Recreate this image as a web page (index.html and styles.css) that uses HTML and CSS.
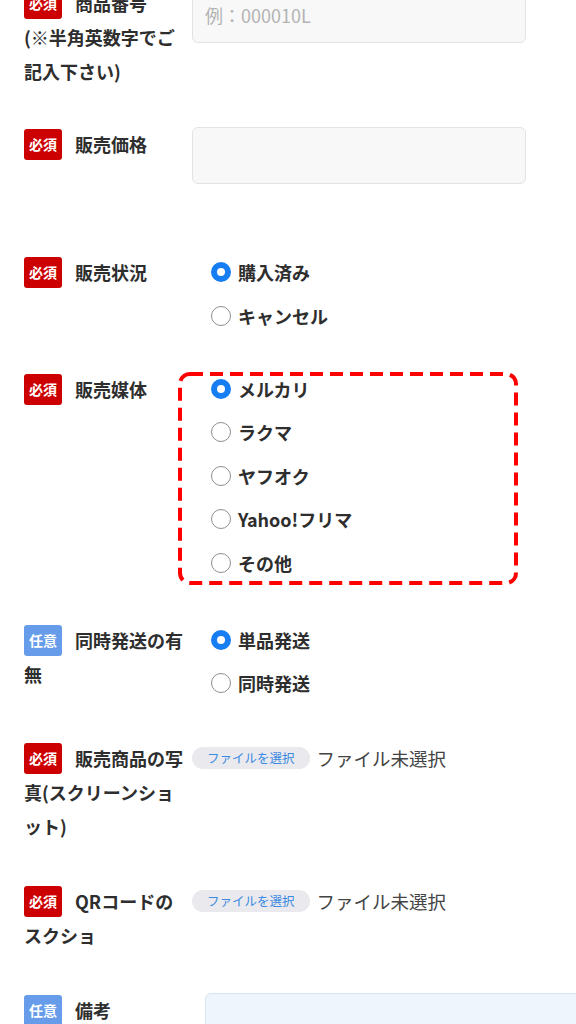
FILE: index.html
```html
<!DOCTYPE html>
<html lang="ja">
<head>
<meta charset="utf-8">
<title>フォーム</title>
<link rel="stylesheet" href="styles.css">
</head>
<body>
<form class="form">
  <div class="row row--code">
    <div class="label"><span class="badge badge--req">必須</span>商品番号<br>(※半角英数字でご記入下さい)</div>
    <div class="field"><input class="text" type="text" placeholder="例：000010L"></div>
  </div>

  <div class="row row--price">
    <div class="label"><span class="badge badge--req">必須</span>販売価格</div>
    <div class="field"><input class="text" type="text"></div>
  </div>

  <div class="row row--status">
    <div class="label"><span class="badge badge--req">必須</span>販売状況</div>
    <div class="field">
      <div class="radios">
        <label class="radio"><input type="radio" name="status" checked><span>購入済み</span></label>
        <label class="radio"><input type="radio" name="status"><span>キャンセル</span></label>
      </div>
    </div>
  </div>

  <div class="row row--media">
    <div class="label"><span class="badge badge--req">必須</span>販売媒体</div>
    <div class="field">
      <div class="radios radios--marked">
        <label class="radio"><input type="radio" name="media" checked><span>メルカリ</span></label>
        <label class="radio"><input type="radio" name="media"><span>ラクマ</span></label>
        <label class="radio"><input type="radio" name="media"><span>ヤフオク</span></label>
        <label class="radio"><input type="radio" name="media"><span>Yahoo!フリマ</span></label>
        <label class="radio"><input type="radio" name="media"><span>その他</span></label>
        <svg class="annot" width="340" height="213" viewBox="0 0 340 213" aria-hidden="true">
          <rect x="2" y="2" width="336" height="209" rx="10" ry="10" fill="none" stroke="#ff0000" stroke-width="4" stroke-dasharray="13 7"/>
        </svg>
      </div>
    </div>
  </div>

  <div class="row">
    <div class="label"><span class="badge badge--opt">任意</span>同時発送の有無</div>
    <div class="field">
      <div class="radios">
        <label class="radio"><input type="radio" name="ship" checked><span>単品発送</span></label>
        <label class="radio"><input type="radio" name="ship"><span>同時発送</span></label>
      </div>
    </div>
  </div>

  <div class="row">
    <div class="label"><span class="badge badge--req">必須</span>販売商品の写真(スクリーンショット)</div>
    <div class="field">
      <div class="file"><span class="file__btn">ファイルを選択</span><span class="file__status">ファイル未選択</span></div>
    </div>
  </div>

  <div class="row">
    <div class="label"><span class="badge badge--req">必須</span>QRコードのスクショ</div>
    <div class="field">
      <div class="file"><span class="file__btn">ファイルを選択</span><span class="file__status">ファイル未選択</span></div>
    </div>
  </div>

  <div class="row">
    <div class="label"><span class="badge badge--opt">任意</span>備考</div>
    <div class="field"><textarea class="memo"></textarea></div>
  </div>
</form>
</body>
</html>
```

FILE: styles.css
```css
* {
  box-sizing: border-box;
}

html,
body {
  margin: 0;
  padding: 0;
}

body {
  width: 576px;
  height: 1024px;
  overflow: hidden;
  background: #ffffff;
  color: #333333;
  font-family: "Noto Sans CJK JP", "Noto Sans", sans-serif;
}

.form {
  margin-top: -14px;
  padding: 0 24px;
}

.row {
  display: grid;
  grid-template-columns: 162px 1fr;
  column-gap: 6px;
  margin-bottom: 41px;
}

.row--code {
  margin-bottom: 39px;
}

.row--price {
  margin-bottom: 71px;
}

.row--status {
  margin-bottom: 39px;
}

.row--media {
  margin-bottom: 43px;
}

.label {
  font-size: 18px;
  font-weight: 700;
  line-height: 34px;
  line-break: normal;
  color: #2e2e2e;
}

.badge {
  display: inline-block;
  vertical-align: top;
  width: 38px;
  height: 31px;
  margin-top: 2px;
  margin-right: 13px;
  border-radius: 3px;
  color: #ffffff;
  font-size: 14px;
  font-weight: 700;
  line-height: 31px;
  text-align: center;
}

.badge--req {
  background: #cc0000;
}

.badge--opt {
  background: #679cea;
}

.text {
  display: block;
  width: 334px;
  height: 57px;
  margin: 0;
  padding: 0 12px;
  border: 1px solid #e3e3e3;
  border-radius: 6px;
  background: #f8f8f8;
  font-family: inherit;
  font-size: 18px;
  color: #333333;
}

.text::placeholder {
  color: #b3b3b3;
}

.radios {
  display: flex;
  flex-direction: column;
  gap: 9.5px;
  padding-left: 19px;
}

.radios--marked {
  position: relative;
}

.annot {
  position: absolute;
  top: 0;
  left: -14px;
  pointer-events: none;
}

.radio {
  display: flex;
  align-items: center;
  gap: 7px;
  height: 34px;
  font-size: 18px;
  font-weight: 700;
  color: #2e2e2e;
}

.radio input {
  appearance: none;
  -webkit-appearance: none;
  flex: none;
  width: 20px;
  height: 20px;
  margin: 0;
  border: 1.5px solid #8f8f8f;
  border-radius: 50%;
  background: #ffffff;
}

.radio input:checked {
  border: 6px solid #167df3;
}

.file {
  display: flex;
  align-items: center;
  gap: 7px;
  height: 34px;
}

.file__btn {
  display: inline-block;
  height: 22px;
  padding: 0 15px;
  border-radius: 11px;
  background: #e9e9ee;
  color: #3b89e2;
  font-size: 12.5px;
  line-height: 22px;
  white-space: nowrap;
}

.file__status {
  font-size: 18.5px;
  color: #444444;
  white-space: nowrap;
}

.memo {
  display: block;
  width: 420px;
  height: 100px;
  margin: 0 0 0 13px;
  border: 1px solid #dae4f0;
  border-radius: 6px;
  background: #eef5fd;
  resize: none;
}
```
